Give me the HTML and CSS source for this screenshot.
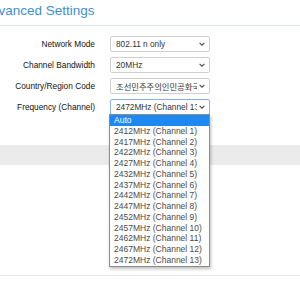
FILE: index.html
```html
<!DOCTYPE html>
<html lang="en">
<head>
	<meta charset="UTF-8">
	<meta name="viewport" content="width=device-width, initial-scale=1.0">
	<title>Advanced Settings</title>
	<link rel="stylesheet" href="styles.css">
</head>
<body>
	<div class="page">
		<div class="header">
			<h1>Advanced Settings</h1>
		</div>

		<!-- Wireless options -->
		<div class="form">
			<div class="row">
				<label>Network Mode</label>
				<div class="select"><span class="value">802.11 n only</span><svg class="chev" width="6" height="4" viewBox="0 0 6 4"><polyline points="0.6,0.8 3,3.2 5.4,0.8" fill="none" stroke="#555" stroke-width="1.2"/></svg></div>
			</div>
			<div class="row">
				<label>Channel Bandwidth</label>
				<div class="select"><span class="value">20MHz</span><svg class="chev" width="6" height="4" viewBox="0 0 6 4"><polyline points="0.6,0.8 3,3.2 5.4,0.8" fill="none" stroke="#555" stroke-width="1.2"/></svg></div>
			</div>
			<div class="row">
				<label>Country/Region Code</label>
				<div class="select"><span class="value">조선민주주의인민공화국</span><svg class="chev" width="6" height="4" viewBox="0 0 6 4"><polyline points="0.6,0.8 3,3.2 5.4,0.8" fill="none" stroke="#555" stroke-width="1.2"/></svg></div>
			</div>
			<div class="row">
				<label>Frequency (Channel)</label>
				<div class="select open"><span class="value">2472MHz (Channel 13)</span><svg class="chev" width="6" height="4" viewBox="0 0 6 4"><polyline points="0.6,0.8 3,3.2 5.4,0.8" fill="none" stroke="#555" stroke-width="1.2"/></svg></div>
			</div>
		</div>

		<div class="band"></div>
		<div class="footer"></div>

		<!-- Open channel list -->
		<ul class="dropdown">
			<li class="active">Auto</li>
			<li>2412MHz (Channel 1)</li>
			<li>2417MHz (Channel 2)</li>
			<li>2422MHz (Channel 3)</li>
			<li>2427MHz (Channel 4)</li>
			<li>2432MHz (Channel 5)</li>
			<li>2437MHz (Channel 6)</li>
			<li>2442MHz (Channel 7)</li>
			<li>2447MHz (Channel 8)</li>
			<li>2452MHz (Channel 9)</li>
			<li>2457MHz (Channel 10)</li>
			<li>2462MHz (Channel 11)</li>
			<li>2467MHz (Channel 12)</li>
			<li>2472MHz (Channel 13)</li>
		</ul>
	</div>
</body>
</html>
```

FILE: styles.css
```css
body {
	margin: 0;
	padding: 0;
	background-color: #fff;
	font-family: "Liberation Sans", Arial, "Noto Sans CJK KR", sans-serif;
	overflow: hidden;
}
.page {
	position: relative;
	width: 300px;
	height: 285px;
}
.header {
	height: 25px;
	border-bottom: 1px solid #dfe7ee;
	overflow: hidden;
}
h1 {
	margin: 0 0 0 -18px;
	padding-top: 3px;
	font-size: 13.5px;
	font-weight: normal;
	line-height: 16px;
	color: #3d8fd1;
	white-space: nowrap;
}
.form {
	display: flex;
	flex-direction: column;
	gap: 5px;
	padding-top: 10px;
}
.row {
	display: flex;
	align-items: center;
	gap: 15px;
	height: 16px;
}
.row label {
	width: 95px;
	text-align: right;
	font-size: 8.3px;
	color: #111;
	white-space: nowrap;
}
.select {
	display: flex;
	align-items: center;
	box-sizing: border-box;
	width: 100px;
	height: 16px;
	padding: 0 4px 0 5px;
	border: 1px solid #cfcfcf;
	border-radius: 2px;
	background-color: #fff;
	font-size: 8.3px;
	color: #333;
}
.select.open {
	border-color: #8fb3dc;
}
.value {
	flex: 1;
	overflow: hidden;
	white-space: nowrap;
}
.chev {
	flex: none;
	margin-left: 2px;
}
.band {
	height: 20px;
	margin-top: 30px;
	background-color: #ebebeb;
}
.footer {
	height: 110px;
	border-bottom: 1px solid #e6e6e6;
}
.dropdown {
	position: absolute;
	top: 114px;
	left: 109px;
	width: 101px;
	box-sizing: border-box;
	margin: 0;
	padding: 0;
	list-style: none;
	border: 1px solid #8c8c8c;
	background-color: #fff;
	box-shadow: 1px 2px 3px rgba(0, 0, 0, 0.25);
	font-size: 8.5px;
	color: #4a4a4a;
}
.dropdown li {
	height: 10.75px;
	line-height: 10.75px;
	padding-left: 4px;
	white-space: nowrap;
	overflow: hidden;
}
.dropdown li.active {
	background-color: #1e88f0;
	color: #fff;
}
```
